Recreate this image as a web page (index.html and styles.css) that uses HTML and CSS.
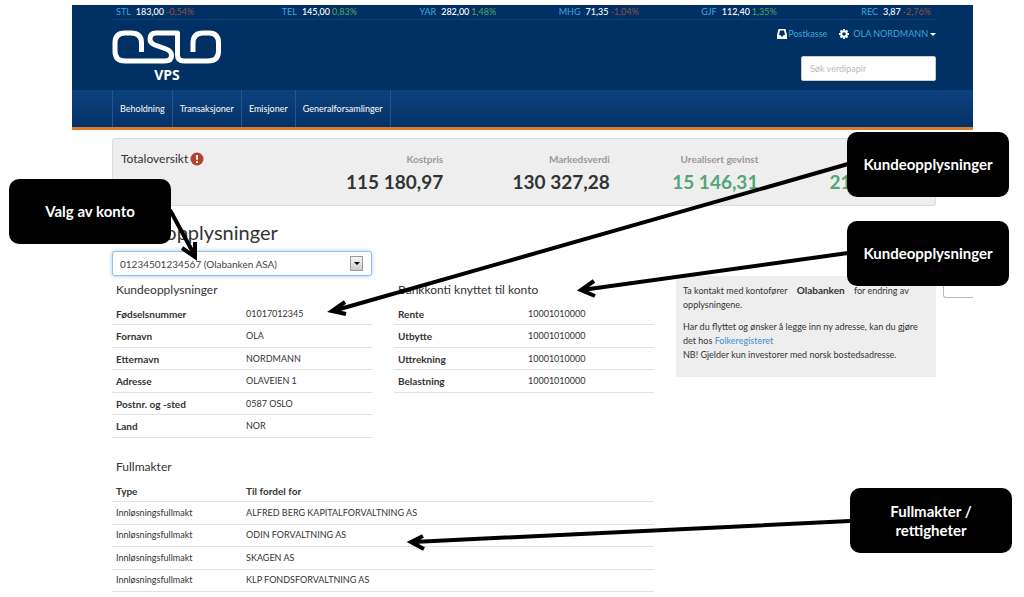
FILE: index.html
```html
<!DOCTYPE html>
<html lang="no">
<head>
<meta charset="utf-8">
<title>Oslo VPS – Kontoopplysninger</title>
<link rel="stylesheet" href="styles.css">
</head>
<body>
<div class="page">
  <header class="header">
    <div class="top">
      <ul class="ticker">
        <li><a href="#">STL</a><b>183,00</b><span class="down">-0,54%</span></li>
        <li><a href="#">TEL</a><b>145,00</b><span class="up">0,83%</span></li>
        <li><a href="#">YAR</a><b>282,00</b><span class="up">1,48%</span></li>
        <li><a href="#">MHG</a><b>71,35</b><span class="down">-1,04%</span></li>
        <li><a href="#">GJF</a><b>112,40</b><span class="up">1,35%</span></li>
        <li><a href="#">REC</a><b>3,87</b><span class="down">-2,76%</span></li>
      </ul>
      <div class="brand-row">
        <div class="brand">
          <svg class="logo" width="110" height="35" viewBox="0 0 110 35" fill="none" stroke="#fff" stroke-width="5" stroke-linejoin="round" aria-label="Oslo">
            <path d="M29.500 22V13Q29.500 3 19 3H13Q3 3 3 13V21Q3 31 13 31H53Q59.500 31 59.500 25.500Q59.500 21 54 19L43 15Q38 13 38 9Q38 3 44 3H65.500V25Q65.500 31 72 31H96Q106.500 31 106.500 21V13Q106.500 3 97 3H91Q81 3 81 13V22"/>
          </svg>
          <span class="brand-sub">VPS</span>
        </div>
        <div class="tools">
          <div class="account">
            <a href="#"><svg width="10" height="10" viewBox="0 0 10 10"><path fill="#fff" fill-rule="evenodd" d="M1.500 0h7L10 6v4H0V6zM3 1.500L2 6h1.500l.7 1.500h1.600L6.500 6H8L7 1.500z"/></svg>Postkasse</a>
            <button class="user" type="button"><svg width="10" height="10" viewBox="0 0 10 10"><g fill="none" stroke="#fff"><circle cx="5" cy="5" r="2.800" stroke-width="2"/><path stroke-width="1.800" d="M5 0v1.700M5 8.300V10M0 5h1.700M8.300 5H10M1.500 1.500l1.200 1.200M7.300 7.300l1.200 1.200M8.500 1.500L7.300 2.700M2.700 7.300L1.500 8.500"/></g></svg><span>OLA NORDMANN</span><i class="caret"></i></button>
          </div>
          <input class="search" type="search" placeholder="Søk verdipapir" aria-label="Søk verdipapir">
        </div>
      </div>
    </div>
    <nav class="nav">
      <a href="#">Beholdning</a><a href="#">Transaksjoner</a><a href="#">Emisjoner</a><a href="#">Generalforsamlinger</a>
    </nav>
  </header>

  <main class="content">
    <section class="summary">
      <div class="summary-title">Totaloversikt
        <svg width="14" height="14" viewBox="0 0 14 14"><circle cx="7" cy="7" r="6.500" fill="#b8402f"/><path stroke="#fff" stroke-width="2" d="M7 3v4.800M7 9v2"/></svg>
      </div>
      <div class="figure"><span>Kostpris</span><strong>115 180,97</strong></div>
      <div class="figure"><span>Markedsverdi</span><strong>130 327,28</strong></div>
      <div class="figure gain"><span>Urealisert gevinst</span><strong>15 146,31</strong></div>
      <div class="figure gain last"><span>&nbsp;</span><strong>21</strong></div>
    </section>

    <h1>Kontoopplysninger</h1>

    <div class="grid">
      <div class="customer">
        <div class="select-wrap">
          <select aria-label="Konto"><option>01234501234567 (Olabanken ASA)</option></select>
          <span class="select-arrow"></span>
        </div>
        <h2>Kundeopplysninger</h2>
        <table class="six">
          <tr><th scope="row">Fødselsnummer</th><td>01017012345</td></tr>
          <tr><th scope="row">Fornavn</th><td>OLA</td></tr>
          <tr><th scope="row">Etternavn</th><td>NORDMANN</td></tr>
          <tr><th scope="row">Adresse</th><td>OLAVEIEN 1</td></tr>
          <tr><th scope="row">Postnr. og -sted</th><td>0587 OSLO</td></tr>
          <tr><th scope="row">Land</th><td>NOR</td></tr>
        </table>
      </div>
      <div class="bank">
        <h2>Bankkonti knyttet til konto</h2>
        <table class="four">
          <tr><th scope="row">Rente</th><td>10001010000</td></tr>
          <tr><th scope="row">Utbytte</th><td>10001010000</td></tr>
          <tr><th scope="row">Uttrekning</th><td>10001010000</td></tr>
          <tr><th scope="row">Belastning</th><td>10001010000</td></tr>
        </table>
      </div>
      <aside class="info">
        <p>Ta kontakt med kontofører <b>Olabanken</b> for endring av opplysningene.</p>
        <p>Har du flyttet og ønsker å legge inn ny adresse, kan du gjøre det hos <a href="#">Folkeregisteret</a><br>NB! Gjelder kun investorer med norsk bostedsadresse.</p>
      </aside>
      <div class="powers">
        <h2>Fullmakter</h2>
        <table class="five">
          <tr><th scope="col">Type</th><th scope="col">Til fordel for</th></tr>
          <tr><td>Innløsningsfullmakt</td><td>ALFRED BERG KAPITALFORVALTNING AS</td></tr>
          <tr><td>Innløsningsfullmakt</td><td>ODIN FORVALTNING AS</td></tr>
          <tr><td>Innløsningsfullmakt</td><td>SKAGEN AS</td></tr>
          <tr><td>Innløsningsfullmakt</td><td>KLP FONDSFORVALTNING AS</td></tr>
        </table>
      </div>
    </div>
  </main>
  <div class="side-tab"></div>
</div>

<svg class="arrows" width="1024" height="597" viewBox="0 0 1024 597" fill="none" stroke="#000" stroke-width="4">
  <path d="M170 210L195 256M182 248L195 257L195 242"/>
  <path d="M848 164L333 311M345 302L332 311L346 314"/>
  <path d="M848 253L582 290M594 281L581 290L595 296"/>
  <path d="M850 521L413 542M423 536L411 542L424 549"/>
</svg>
<div class="callout account-note">Valg av konto</div>
<div class="callout customer-note">Kundeopplysninger</div>
<div class="callout bank-note">Kundeopplysninger</div>
<div class="callout powers-note">Fullmakter /<br>rettigheter</div>
</body>
</html>
```

FILE: styles.css
```css
* { box-sizing: border-box; }
body {
  margin: 0;
  padding-top: 5px;
  position: relative;
  background: #fff;
  color: #333;
  font: 10px/14px Lato, "Open Sans", sans-serif;
  overflow-x: hidden;
}
a { color: #3d8fd0; text-decoration: none; }
.page { position: relative; margin: 0 51px 0 72px; }

.header { background: #003064; border-bottom: 3px solid #df7a2d; font-size: 9px; }
.top { height: 85px; padding: 0 37px 0 40px; }
.ticker {
  display: flex;
  justify-content: space-between;
  margin: 0;
  padding: 0 5px 0 4px;
  list-style: none;
  border-bottom: 1px solid #123f73;
}
.ticker li { display: flex; gap: 2px; color: #fff; }
.ticker li:first-child { margin-right: 25px; }
.ticker li:last-child { margin-left: 22px; }
.ticker a { margin-right: 3px; color: #43a5d8; }
.ticker b { font-weight: 500; }
.up { color: #55a65f; }
.down { color: #9b4a44; }
.brand-row { display: flex; justify-content: space-between; }
.brand { width: 110px; padding-top: 10px; text-align: center; }
.logo { display: block; }
.brand-sub { display: block; color: #fff; font: 700 14px/20px "Open Sans", sans-serif; }
.tools { display: flex; flex-direction: column; align-items: flex-end; gap: 15px; padding-top: 7px; }
.account { display: flex; gap: 12px; }
.account a, .user { display: flex; align-items: center; gap: 1px; color: #43a5d8; }
.user { gap: 4px; padding: 0; border: 0; background: none; font: inherit; }
.caret { border: 3px solid transparent; border-top-color: #fff; border-bottom: 0; margin-left: -2px; }
.search {
  width: 135px;
  height: 25px;
  padding: 0 8px;
  border: 1px solid #ccc;
  border-radius: 2px;
  background: #fff;
  font: inherit;
}
.search::placeholder { color: #bbb; opacity: 1; }
.nav {
  display: flex;
  height: 37px;
  padding-left: 40px;
  background: linear-gradient(#0c4181, #08386f 60%, #00336a);
}
.nav a { display: flex; align-items: center; padding: 0 7px; color: #fff; border-right: 1px solid #26558b; }
.nav a:first-child { border-left: 1px solid #26558b; }

.content { padding: 8px 37px 0 40px; }
.summary {
  display: grid;
  grid-template-columns: 110fr 221fr 167fr 149fr 177fr;
  height: 68px;
  padding-top: 13px;
  background: #eee;
  border: 1px solid #ddd;
  border-radius: 3px;
}
.summary-title { display: flex; gap: 2px; padding-left: 8px; height: 14px; font-size: 12px; white-space: nowrap; }
.figure { display: flex; flex-direction: column; align-items: flex-end; gap: 6px; white-space: nowrap; }
.figure span { color: #999; font-weight: 700; }
.figure strong { font-size: 19px; line-height: 20px; }
.gain strong { color: #55a576; }
.last { align-items: flex-start; padding-left: 71px; }

h1 { margin: 13px 0 6px; font-size: 20px; line-height: 26px; font-weight: 400; }
h2 { margin: 0; padding: 0 4px; font-size: 12px; line-height: 16px; font-weight: 400; }
.grid { display: grid; grid-template-columns: repeat(3, 1fr); column-gap: 22px; }
.select-wrap { position: relative; margin-bottom: 6px; }
select {
  appearance: none;
  display: block;
  width: 100%;
  height: 25px;
  padding: 0 7px;
  border: 1px solid #8fc0e8;
  border-radius: 3px;
  background: #fff;
  box-shadow: 0 0 4px #9dcdf2;
  color: #444;
  font: inherit;
}
.select-arrow {
  position: absolute;
  right: 9px;
  top: 5px;
  display: grid;
  place-items: center;
  width: 13px;
  height: 15px;
  border: 1px solid #999;
  background: linear-gradient(#f5f5f5, #ccc);
  pointer-events: none;
}
.select-arrow::after { content: ""; border: 3px solid transparent; border-top-color: #000; border-bottom: 0; }
.bank { padding-top: 31px; }
table { width: 100%; margin-top: 5px; border-collapse: collapse; table-layout: fixed; }
th, td { padding: 0 4px; text-align: left; border-bottom: 1px solid #e2e2e2; }
td { font-size: 9px; }
.six { height: 135px; }
.four { height: 90px; }
.five { height: 112px; }
.five th:first-child { width: 24%; }
.info { align-self: start; margin-top: 25px; padding: 7px 7px 15px; background: #eee; font-size: 9px; }
.info p { margin: 0 0 8px; }
.info p:last-child { margin: 0; }
.info b { margin: 0 7px; font-size: 10px; }
.powers { grid-column: span 2; margin-top: 21px; }
.side-tab {
  position: absolute;
  right: 0;
  top: 270px;
  width: 30px;
  height: 23px;
  border: 1px solid #bbb;
  border-right: 0;
  border-radius: 3px 0 0 3px;
}

.arrows { position: absolute; left: 0; top: 0; pointer-events: none; }
.callout {
  position: absolute;
  display: grid;
  place-items: center;
  width: 162px;
  height: 65px;
  border-radius: 10px;
  background: #000;
  color: #fff;
  font-size: 15px;
  line-height: 19px;
  font-weight: 700;
  text-align: center;
}
.account-note { left: 9px; top: 179px; }
.customer-note { right: 15px; top: 132px; }
.bank-note { right: 15px; top: 221px; }
.powers-note { right: 12px; top: 488px; }
```
